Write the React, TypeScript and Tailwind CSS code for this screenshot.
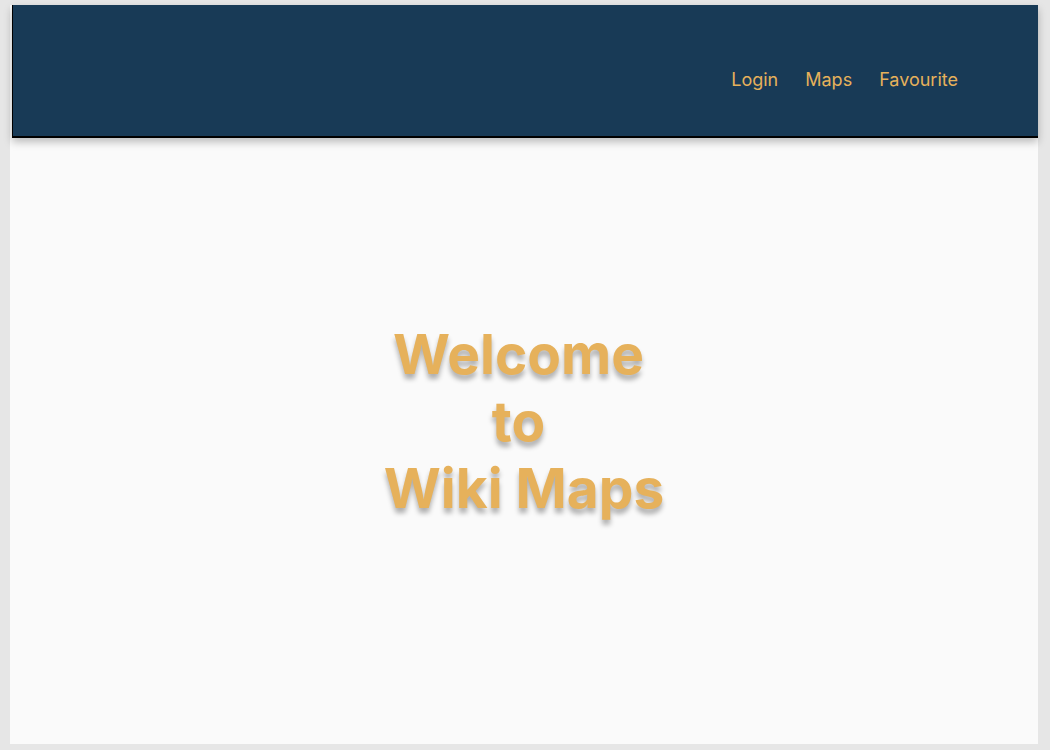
export default function App() {
  const links = ["Login", "Maps", "Favourite"];

  return (
    <div className="min-h-screen bg-[#e6e6e6] pt-[5px] pl-[10px] pr-[12px] pb-[6px] font-['Inter',sans-serif]">
      <div className="h-[739px] bg-[#fafafa] flex flex-col">
        {/* top bar */}
        <header className="ml-[2px] h-[133px] bg-[#183a56] border-l border-b-2 border-black shadow-[0_4px_8px_rgba(0,0,0,0.25)] flex items-center justify-end pr-[80px] pt-[18px]">
          <nav className="flex gap-[27px]">
            {links.map((link) => (
              <a key={link} href="#" className="text-[18px] text-[#e6b15b]">
                {link}
              </a>
            ))}
          </nav>
        </header>

        <main className="flex-1 flex items-center justify-center pb-[40px]">
          <h1 className="flex flex-col items-center text-[55px] leading-[67px] font-bold text-[#e6b15b] [text-shadow:0_5px_5px_rgba(0,0,0,0.3)]">
            <span className="pr-[11px]">Welcome</span>
            <span className="pr-[11px]">to</span>
            <span>Wiki Maps</span>
          </h1>
        </main>
      </div>
    </div>
  );
}
